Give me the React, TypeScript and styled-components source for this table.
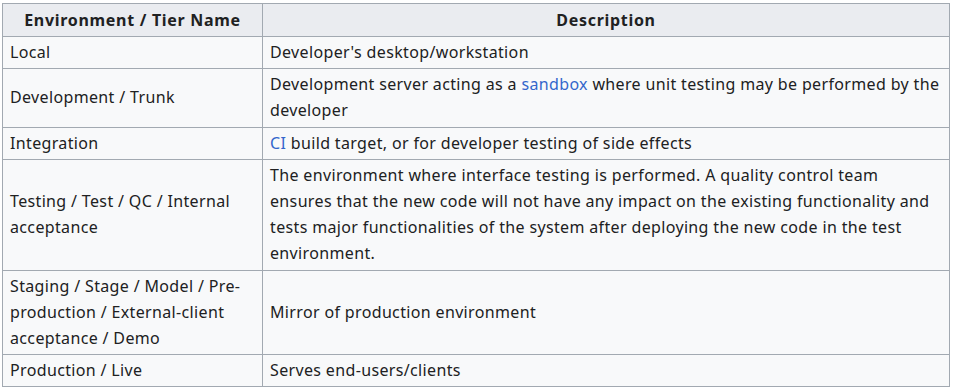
import type {ReactNode} from "react";
import styled, { createGlobalStyle } from "styled-components";

type TierRow = {
    name: string;
    description: ReactNode;
}

const GlobalStyle = createGlobalStyle`
    body {
        margin: 0;
        background: #ffffff;
        font-family: "Noto Sans", "Open Sans", sans-serif;
        color: #202122;
    }
`

const Page = styled.div`
    padding: 3px 0 0 2px;
`
const WikiTable = styled.table`
    width: 948px;
    table-layout: fixed;
    border-collapse: collapse;
    background: #f8f9fa;
    border: 1px solid #a2a9b1;
    font-size: 16px;
    line-height: 26.2px;
    letter-spacing: 0.35px;
`
const HeadCell = styled.th`
    background: #eaecf0;
    border: 1px solid #a2a9b1;
    padding: 3px 6px;
    line-height: 26px;
    text-align: center;
    font-weight: bold;
    letter-spacing: 0.7px;
`
const Cell = styled.td`
    border: 1px solid #a2a9b1;
    padding: 2px 7px 3px;
    vertical-align: middle;
`
const Link = styled.a`
    color: #3366cc;
    text-decoration: none;
`

const rows: Array<TierRow> = [
    {name: "Local", description: "Developer's desktop/workstation"},
    {
        name: "Development / Trunk",
        description: <>Development server acting as a <Link href="#">sandbox</Link> where unit testing may be performed by the developer</>,
    },
    {name: "Integration", description: <><Link href="#">CI</Link> build target, or for developer testing of side effects</>},
    {
        name: "Testing / Test / QC / Internal acceptance",
        description: "The environment where interface testing is performed. A quality control team ensures that the new code will not have any impact on the existing functionality and tests major functionalities of the system after deploying the new code in the test environment.",
    },
    {name: "Staging / Stage / Model / Pre-production / External-client acceptance / Demo", description: "Mirror of production environment"},
    {name: "Production / Live", description: "Serves end-users/clients"},
]

export default function App() {
    return (
        <>
            <GlobalStyle/>
            <Page>
                <WikiTable>
                    <colgroup>
                        <col style={{width: 260}}/>
                        <col/>
                    </colgroup>
                    <thead>
                    <tr>
                        <HeadCell>Environment / Tier Name</HeadCell>
                        <HeadCell>Description</HeadCell>
                    </tr>
                    </thead>
                    <tbody>
                    {rows.map((r, index) => (
                        <tr key={index}>
                            <Cell>{r.name}</Cell>
                            <Cell>{r.description}</Cell>
                        </tr>
                    ))}
                    </tbody>
                </WikiTable>
            </Page>
        </>
    );
}
